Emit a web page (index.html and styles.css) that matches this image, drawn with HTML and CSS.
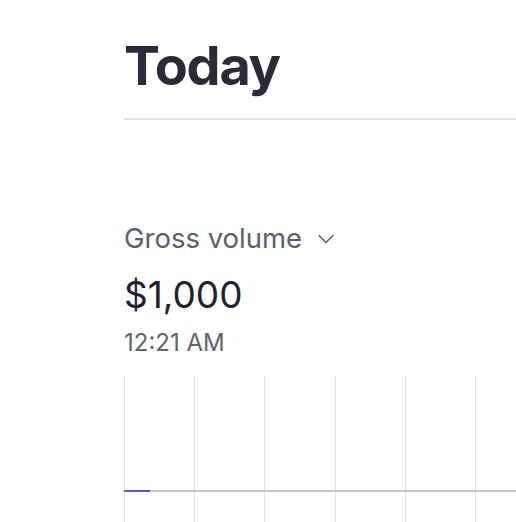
FILE: index.html
```html
<!DOCTYPE html>
<html>
<head>
<meta charset="utf-8">
<link rel="stylesheet" href="styles.css">
</head>
<body>
<main class="page">
  <header class="head">
    <h1 class="title">Today</h1>
  </header>
  <section class="metrics">
    <div class="metric">
      <div class="label">Gross volume
        <svg class="chev" width="16" height="10" viewBox="0 0 16 10"><path d="M1 1.5 L8 8.5 L15 1.5" fill="none" stroke="#5b616e" stroke-width="1.5" stroke-linecap="round" stroke-linejoin="round"/></svg>
      </div>
      <div class="value">$1,000</div>
      <div class="time">12:21 AM</div>
      <div class="chart">
        <div class="cols">
          <span class="col"></span><span class="col"></span><span class="col"></span><span class="col"></span><span class="col"></span><span class="col"></span>
        </div>
        <div class="base"><span class="series"></span></div>
      </div>
    </div>
    <div class="metric">
      <div class="label">Net volume</div>
      <div class="value">$1,000</div>
      <div class="time">12:21 AM</div>
      <div class="chart">
        <div class="cols">
          <span class="col nl"></span><span class="col"></span><span class="col"></span>
        </div>
        <div class="base"></div>
      </div>
    </div>
  </section>
</main>
</body>
</html>
```
FILE: styles.css
```css
html, body {
  margin: 0;
  padding: 0;
  background: #ffffff;
  overflow: hidden;
}
body {
  font-family: Inter, "Noto Sans", sans-serif;
  width: 516px;
  height: 522px;
}
.page {
  padding-left: 124px;
  padding-top: 34px;
}
.head {
  border-bottom: 2px solid #e3e3e6;
  padding-bottom: 20px;
}
.title {
  margin: 0;
  font-size: 54px;
  line-height: 64px;
  font-weight: 700;
  color: #2a2a38;
  letter-spacing: -1.2px;
}
.metrics {
  display: flex;
  gap: 15px;
  margin-top: 101px;
}
.metric {
  flex: 0 0 372px;
}
.label {
  display: flex;
  align-items: center;
  gap: 16px;
  font-size: 27.5px;
  line-height: 34px;
  color: #5a606d;
  white-space: nowrap;
}
.chev {
  margin-top: 2px;
}
.value {
  margin-top: 17.5px;
  font-size: 37px;
  line-height: 44px;
  color: #1e2130;
  white-space: nowrap;
}
.time {
  margin-top: 11px;
  font-size: 24px;
  line-height: 30px;
  color: #5f6470;
  white-space: nowrap;
}
.chart {
  position: relative;
  margin-top: 19px;
  height: 160px;
}
.cols {
  display: flex;
  height: 100%;
}
.col {
  flex: 0 0 70.2px;
  border-left: 1px solid #e2e2e6;
  box-sizing: border-box;
}
.col.nl {
  border-left: none;
}
.base {
  position: absolute;
  left: 0;
  right: -20px;
  top: 113px;
  height: 2px;
  background: #c4c5ca;
}
.series {
  display: block;
  width: 26px;
  height: 2px;
  background: #5a55d6;
}
```
